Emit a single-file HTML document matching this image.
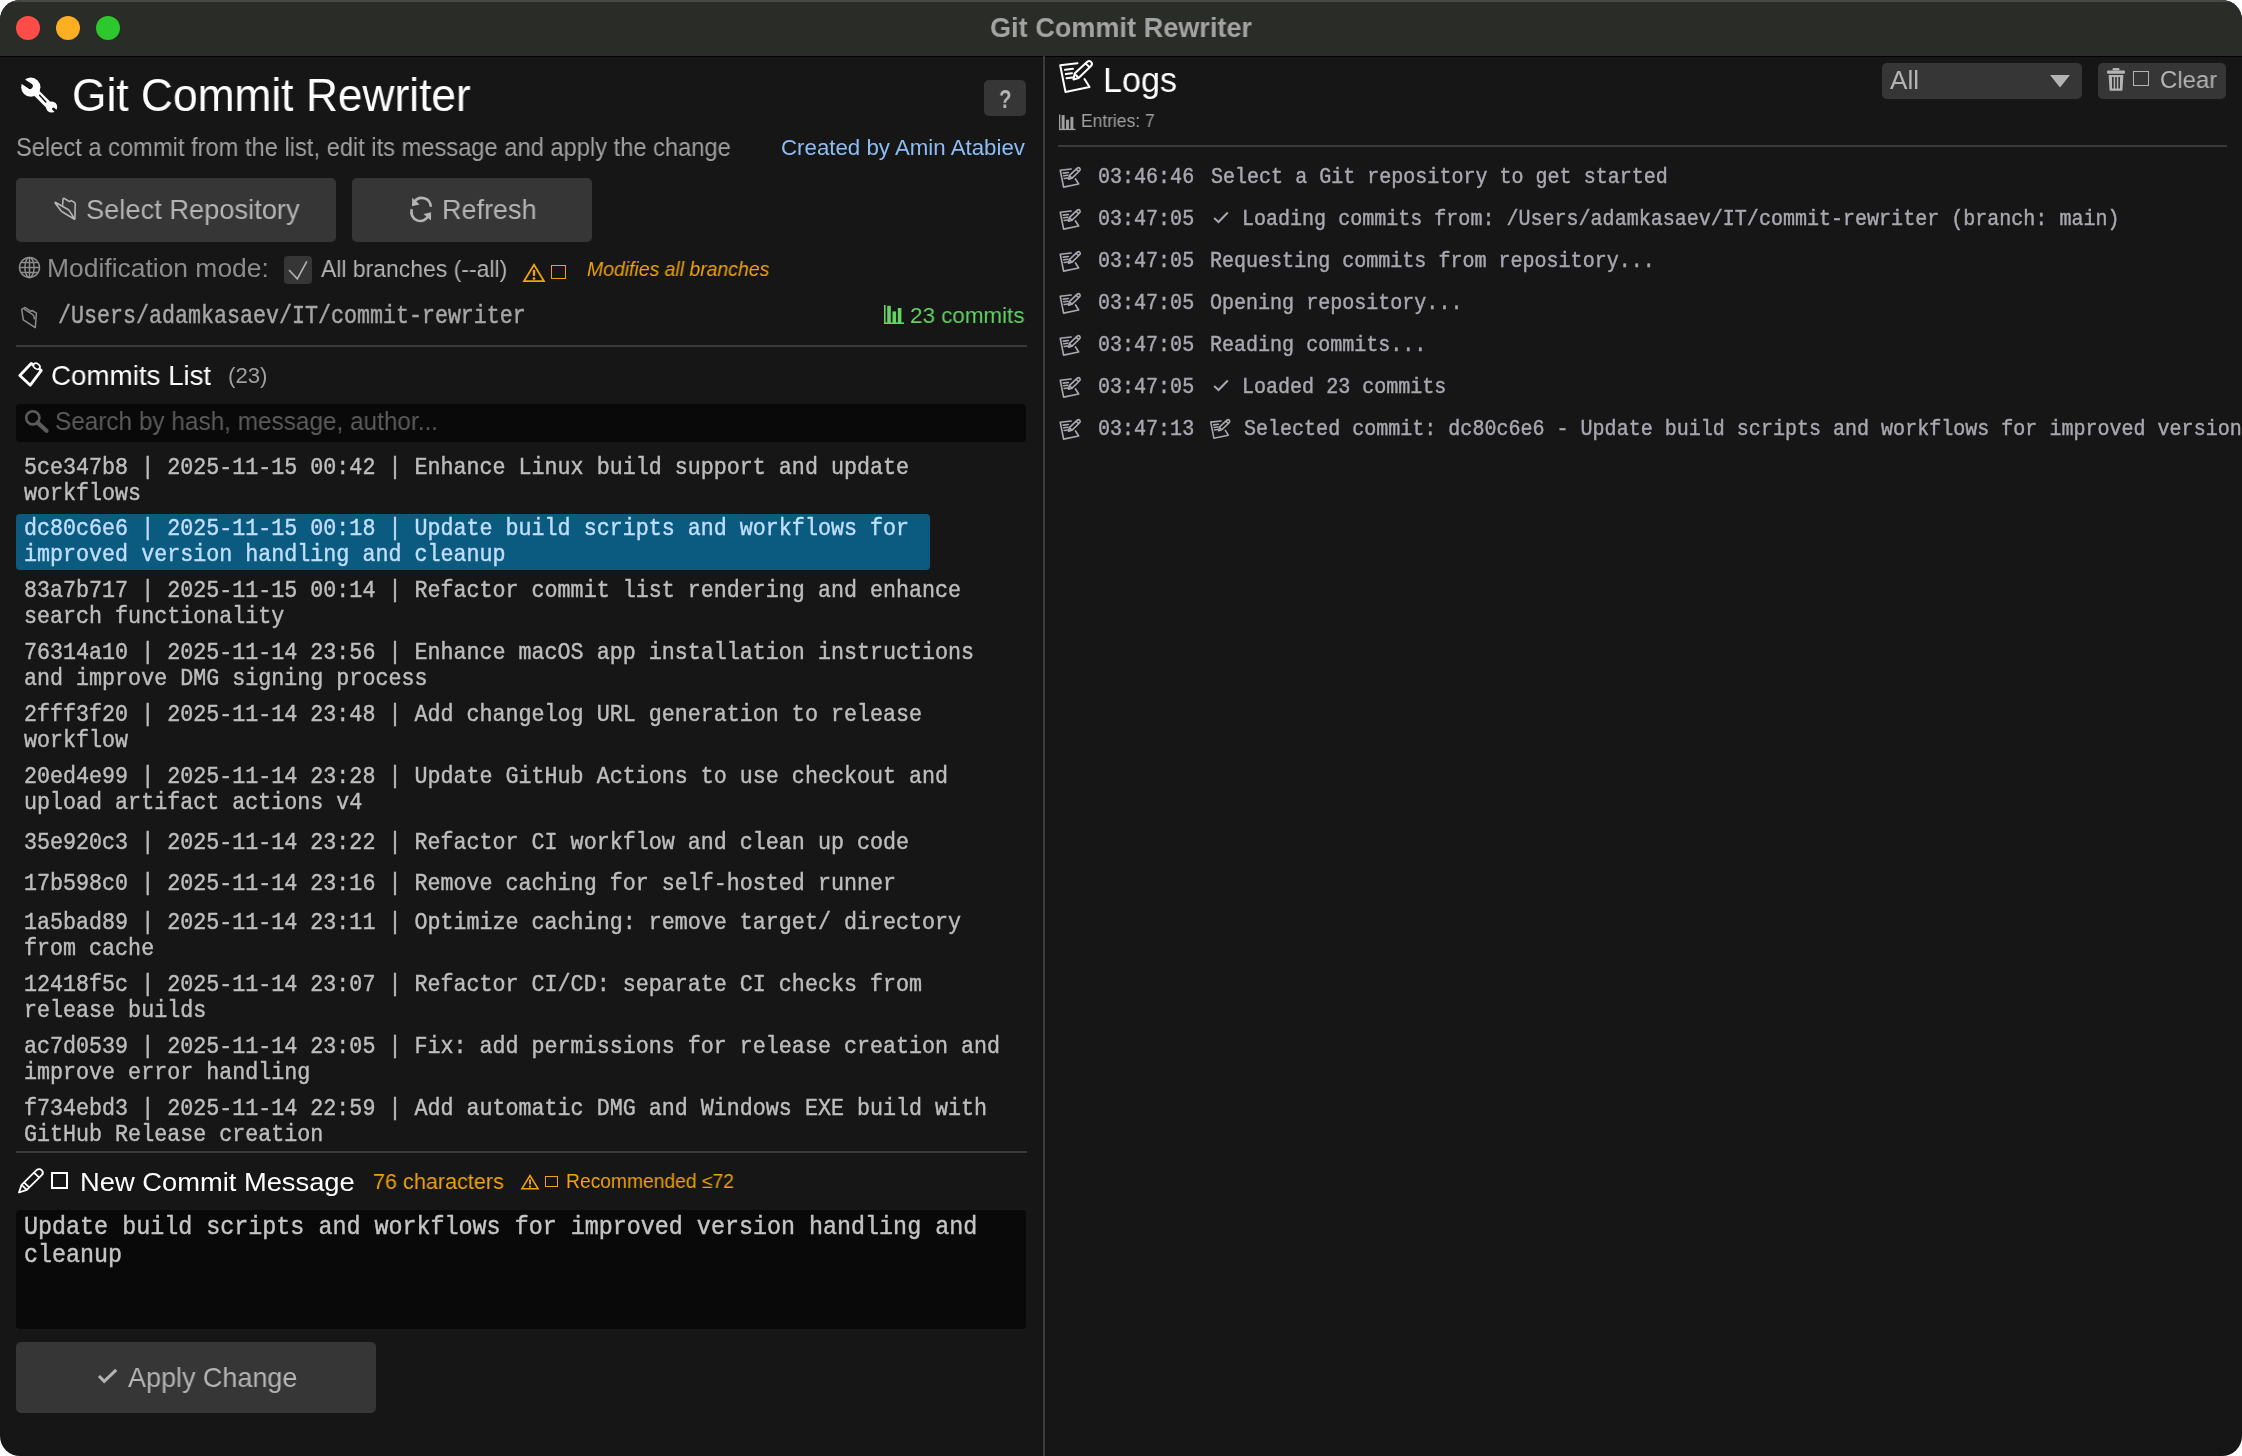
<!DOCTYPE html>
<html><head><meta charset="utf-8"><title>Git Commit Rewriter</title>
<style>
html,body{margin:0;padding:0;background:#ffffff;width:2242px;height:1456px;overflow:hidden}
.win{position:absolute;left:0;top:0;width:2242px;height:1456px;border-radius:20px;overflow:hidden;background:#161616}
.t{position:absolute;white-space:pre;transform-origin:0 0;will-change:transform}
.m{-webkit-text-stroke:0.4px currentColor}
.ic{position:absolute;overflow:visible}
.bx{position:absolute;box-sizing:border-box}
.r{position:absolute;box-sizing:border-box}
</style></head><body>
<div class="win">
  <div class="r" style="left:0;top:0;width:2242px;height:56px;background:#2a2c28"></div>
  <div class="r" style="left:0;top:56px;width:2242px;height:1.4px;background:#020202"></div>
  <div class="r" style="left:0;top:0;width:2242px;height:1.5px;background:#5a5b59;opacity:.6"></div>
  <div class="r" style="left:16px;top:16px;width:24px;height:24px;border-radius:50%;background:#fe4d48"></div>
  <div class="r" style="left:56px;top:16px;width:24px;height:24px;border-radius:50%;background:#fdaf24"></div>
  <div class="r" style="left:96px;top:16px;width:24px;height:24px;border-radius:50%;background:#2cc82c"></div>
  <!-- vertical separator -->
  <div class="r" style="left:1043px;top:56px;width:2px;height:1400px;background:#3a3a3a"></div>
  <!-- help button -->
  <div class="r" style="left:984px;top:80px;width:42px;height:36px;border-radius:5px;background:#363636"></div>
  <!-- buttons -->
  <div class="r" style="left:16px;top:178px;width:320px;height:64px;border-radius:5px;background:#363636"></div>
  <div class="r" style="left:352px;top:178px;width:240px;height:64px;border-radius:5px;background:#363636"></div>
  <!-- checkbox -->
  <div class="r" style="left:284px;top:256px;width:28px;height:28px;border-radius:4px;background:#363636"></div>
  <svg class="ic" style="left:284px;top:256px;width:28px;height:28px" viewBox="0 0 28 28"><path d="M5 14 L13.3 22.8 L22.8 5.4" fill="none" stroke="#b4b4b4" stroke-width="1.6"/></svg>
  <!-- separators -->
  <div class="r" style="left:16px;top:345px;width:1011px;height:2px;background:#3a3a3a"></div>
  <div class="r" style="left:16px;top:1151px;width:1011px;height:2px;background:#3a3a3a"></div>
  <div class="r" style="left:1058px;top:145px;width:1169px;height:2px;background:#3a3a3a"></div>
  <!-- search box -->
  <div class="r" style="left:16px;top:404px;width:1010px;height:38px;border-radius:4px;background:#090909"></div>
  <!-- selected row -->
  <div class="r" style="left:16px;top:514px;width:914px;height:56px;border-radius:4px;background:#0b5a80"></div>
  <!-- text edit -->
  <div class="r" style="left:16px;top:1210px;width:1010px;height:119px;border-radius:4px;background:#090909"></div>
  <!-- apply button -->
  <div class="r" style="left:16px;top:1342px;width:360px;height:71px;border-radius:5px;background:#363636"></div>
  <!-- dropdown + clear -->
  <div class="r" style="left:1882px;top:63px;width:200px;height:36px;border-radius:5px;background:#363636"></div>
  <div class="r" style="left:2098px;top:63px;width:128px;height:36px;border-radius:5px;background:#363636"></div>
  <svg class="ic" style="left:16px;top:72px;width:45px;height:45px;" viewBox="0 0 45 45"><circle cx="14.8" cy="15.2" r="9.6" fill="#fff"/><path d="M18 18.5 L34.5 35" stroke="#fff" stroke-width="7"/><circle cx="35.6" cy="35" r="5.6" fill="#fff"/><path d="M4 7.5 L14 14.2" stroke="#161616" stroke-width="5.6" stroke-linecap="round"/><path d="M37.5 37 L43 42" stroke="#161616" stroke-width="3" stroke-linecap="round"/><path d="M23.6 23.2 L29.8 30" stroke="#161616" stroke-width="1.5" stroke-linecap="round"/></svg><svg class="ic" style="left:48px;top:190px;width:36px;height:36px;" viewBox="0 0 36 36"><g fill="none" stroke="#b4b4b4" stroke-width="1.6" stroke-linejoin="round" stroke-linecap="round"><path d="M14.6 15.3 L15 9.2 Q15.2 8 16.4 8.5 L21.5 11.6 L23.2 10.6 L26.4 12.4 Q27.2 12.9 27.2 13.8 L26.9 28.8"/><path d="M7.2 12.9 Q6.8 12.1 7.7 12.5 L20.5 19.8 Q22 20.8 26.5 29.2 L14.5 22 Q13.6 21.5 13.2 21 Z"/></g></svg><svg class="ic" style="left:409px;top:196px;width:25px;height:26px;" viewBox="0 0 25 26"><g fill="none" stroke="#b4b4b4" stroke-width="2.6"><path d="M5.2 6.2 A9 9 0 0 1 21.8 10.8"/><path d="M19.6 19.6 A9 9 0 0 1 2.8 13.2"/></g><path d="M3.2 1.8 L3 10.2 L10.6 8.4 Z" fill="#b4b4b4"/><path d="M22 24.6 L22.1 16.2 L14.5 18 Z" fill="#b4b4b4"/></svg><svg class="ic" style="left:18px;top:256px;width:23px;height:23px;" viewBox="0 0 23 23"><g fill="none" stroke="#8c8c8c" stroke-width="1.5"><circle cx="11.5" cy="11.5" r="10"/><ellipse cx="11.5" cy="11.5" rx="4.6" ry="10"/><path d="M11.5 1.5 V21.5 M1.5 11.5 H21.5 M3 6.5 H20 M3 16.5 H20"/></g></svg><svg class="ic" style="left:523px;top:263px;width:22px;height:19px;" viewBox="0 0 22 19"><path d="M11.0 1.8 L20.92 18.1 L1.08 18.1 Z" fill="none" stroke="#f0a30a" stroke-width="1.8" stroke-linejoin="miter"/><path d="M11.0 6.84 V12.920000000000002" stroke="#f0a30a" stroke-width="2.3400000000000003"/><circle cx="11.0" cy="15.579999999999998" r="1.35" fill="#f0a30a"/></svg><div class="bx" style="left:551px;top:264.7px;width:15px;height:14.2px;border:1.8px solid #f0a30a"></div><svg class="ic" style="left:521px;top:1174px;width:18px;height:15.5px;" viewBox="0 0 18 15.5"><path d="M9.0 1.5 L17.1 14.75 L0.8999999999999999 14.75 Z" fill="none" stroke="#f0a30a" stroke-width="1.5" stroke-linejoin="miter"/><path d="M9.0 5.58 V10.540000000000001" stroke="#f0a30a" stroke-width="1.9500000000000002"/><circle cx="9.0" cy="12.709999999999999" r="1.125" fill="#f0a30a"/></svg><div class="bx" style="left:544.7px;top:1175.6px;width:13.3px;height:11.3px;border:1.5px solid #f0a30a"></div><svg class="ic" style="left:14px;top:300px;width:30px;height:34px;" viewBox="0 0 30 34"><g fill="none" stroke="#8c8c8c" stroke-width="1.5" stroke-linejoin="round" stroke-linecap="round"><path d="M7.7 9.3 L11.2 7.5 L16.8 11.4 L18.2 10.5 L22.4 13.1 L21.3 27.6 L9.3 19.9 Z"/><path d="M10.7 9.3 L19.2 15 Q20.3 16 20.3 18.7"/></g></svg><svg class="ic" style="left:884px;top:305px;width:20px;height:19px;" viewBox="0 0 20 19"><g fill="#64d264"><rect x="0" y="0" width="1.6" height="19"/><rect x="3.2" y="0.8" width="3.6" height="17.4"/><rect x="8.5" y="6.4" width="3.6" height="11.8"/><rect x="13.8" y="3" width="3.6" height="15.2"/><rect x="0" y="17.4" width="20" height="1.6"/></g></svg><svg class="ic" style="left:14px;top:356px;width:34px;height:34px;" viewBox="0 0 34 34"><path d="M17.2 7.5 L27.3 14.4 L16.3 29.2 L5.8 19.5 Z" fill="none" stroke="#fff" stroke-width="2.8" stroke-linejoin="round"/><ellipse cx="22.7" cy="10.3" rx="3.5" ry="2.6" transform="rotate(35 22.7 10.3)" fill="#161616" stroke="#fff" stroke-width="1.6"/></svg><svg class="ic" style="left:24px;top:409px;width:25px;height:24px;" viewBox="0 0 25 24"><circle cx="8.8" cy="8.8" r="6.6" fill="none" stroke="#5c5c5c" stroke-width="2.6"/><path d="M13.6 13.6 L22.5 21.8" stroke="#5c5c5c" stroke-width="4.2" stroke-linecap="round"/></svg><svg class="ic" style="left:17px;top:1168px;width:27px;height:26px;" viewBox="0 0 27 26"><g fill="none" stroke="#fff" stroke-width="1.8" stroke-linejoin="round"><path d="M2 24.5 L4.6 16.8 L19.5 2.2 C21 0.8 23.4 0.9 24.8 2.3 C26.1 3.7 26.1 5.8 24.7 7.2 L9.8 21.8 Z"/><path d="M4.6 16.8 L9.8 21.8 M7 14.4 L12.2 19.4 M17 4.6 L22.2 9.6"/></g></svg><div class="bx" style="left:50.5px;top:1172px;width:17.5px;height:17px;border:2px solid #fff"></div><svg class="ic" style="left:97px;top:1368px;width:21px;height:16px;" viewBox="0 0 21 16"><path d="M2 8 L7.2 13.3 L19.2 1.8" fill="none" stroke="#b4b4b4" stroke-width="3"/></svg><svg class="ic" style="left:1059px;top:60px;width:35px;height:35px;" viewBox="0 0 35 35"><g fill="none" stroke="#fff" stroke-width="2.0" stroke-linejoin="round" stroke-linecap="round"><path d="M1.2 5.2 L18.5 3.2 M1.2 5.2 L6.5 32 L30.5 27 L25.5 19"/><path d="M6 9.8 L14 8.8 M6.8 14 L13 13.2 M7.5 18.2 L13.5 17.4"/><path d="M14.5 19.5 L15.6 13.6 L28.3 1.8 C29.6 0.8 31.3 1 32.3 2.2 C33.2 3.4 33 5 32 6 L19.6 18 Z"/><path d="M16.8 15 L18.8 17 M26.5 3.6 L30.2 6.8"/></g></svg><svg class="ic" style="left:1059px;top:113.5px;width:16.5px;height:16.5px;" viewBox="0 0 20 19"><g fill="#a0a0a0"><rect x="0" y="0" width="1.6" height="19"/><rect x="3.2" y="0.8" width="3.6" height="17.4"/><rect x="8.5" y="6.4" width="3.6" height="11.8"/><rect x="13.8" y="3" width="3.6" height="15.2"/><rect x="0" y="17.4" width="20" height="1.6"/></g></svg><svg class="ic" style="left:2050px;top:74.5px;width:20px;height:12.5px;" viewBox="0 0 20 12.5"><path d="M0 0 H20 L10 12.5 Z" fill="#b4b4b4"/></svg><svg class="ic" style="left:2107px;top:68px;width:18px;height:23px;" viewBox="0 0 18 23"><g fill="#b4b4b4"><rect x="5.5" y="0" width="7" height="2.6" rx="1"/><rect x="0" y="2.4" width="18" height="3.4" rx="1.2"/><path d="M1.6 7 H16.4 L15.4 22.8 H2.6 Z"/></g><g fill="#363636"><rect x="5" y="9" width="1.7" height="11.5"/><rect x="8.15" y="9" width="1.7" height="11.5"/><rect x="11.3" y="9" width="1.7" height="11.5"/></g></svg><div class="bx" style="left:2133px;top:71.4px;width:16px;height:14.8px;border:1.8px solid #b4b4b4"></div><svg class="ic" style="left:1059px;top:167px;width:23px;height:22px;overflow:visible" viewBox="0 0 35 35"><g fill="none" stroke="#a9a7b0" stroke-width="2.6" stroke-linejoin="round" stroke-linecap="round"><path d="M1.2 5.2 L18.5 3.2 M1.2 5.2 L6.5 32 L30.5 27 L25.5 19"/><path d="M6 9.8 L14 8.8 M6.8 14 L13 13.2 M7.5 18.2 L13.5 17.4"/><path d="M14.5 19.5 L15.6 13.6 L28.3 1.8 C29.6 0.8 31.3 1 32.3 2.2 C33.2 3.4 33 5 32 6 L19.6 18 Z"/><path d="M16.8 15 L18.8 17 M26.5 3.6 L30.2 6.8"/></g></svg><svg class="ic" style="left:1059px;top:209px;width:23px;height:22px;overflow:visible" viewBox="0 0 35 35"><g fill="none" stroke="#a9a7b0" stroke-width="2.6" stroke-linejoin="round" stroke-linecap="round"><path d="M1.2 5.2 L18.5 3.2 M1.2 5.2 L6.5 32 L30.5 27 L25.5 19"/><path d="M6 9.8 L14 8.8 M6.8 14 L13 13.2 M7.5 18.2 L13.5 17.4"/><path d="M14.5 19.5 L15.6 13.6 L28.3 1.8 C29.6 0.8 31.3 1 32.3 2.2 C33.2 3.4 33 5 32 6 L19.6 18 Z"/><path d="M16.8 15 L18.8 17 M26.5 3.6 L30.2 6.8"/></g></svg><svg class="ic" style="left:1059px;top:251px;width:23px;height:22px;overflow:visible" viewBox="0 0 35 35"><g fill="none" stroke="#a9a7b0" stroke-width="2.6" stroke-linejoin="round" stroke-linecap="round"><path d="M1.2 5.2 L18.5 3.2 M1.2 5.2 L6.5 32 L30.5 27 L25.5 19"/><path d="M6 9.8 L14 8.8 M6.8 14 L13 13.2 M7.5 18.2 L13.5 17.4"/><path d="M14.5 19.5 L15.6 13.6 L28.3 1.8 C29.6 0.8 31.3 1 32.3 2.2 C33.2 3.4 33 5 32 6 L19.6 18 Z"/><path d="M16.8 15 L18.8 17 M26.5 3.6 L30.2 6.8"/></g></svg><svg class="ic" style="left:1059px;top:293px;width:23px;height:22px;overflow:visible" viewBox="0 0 35 35"><g fill="none" stroke="#a9a7b0" stroke-width="2.6" stroke-linejoin="round" stroke-linecap="round"><path d="M1.2 5.2 L18.5 3.2 M1.2 5.2 L6.5 32 L30.5 27 L25.5 19"/><path d="M6 9.8 L14 8.8 M6.8 14 L13 13.2 M7.5 18.2 L13.5 17.4"/><path d="M14.5 19.5 L15.6 13.6 L28.3 1.8 C29.6 0.8 31.3 1 32.3 2.2 C33.2 3.4 33 5 32 6 L19.6 18 Z"/><path d="M16.8 15 L18.8 17 M26.5 3.6 L30.2 6.8"/></g></svg><svg class="ic" style="left:1059px;top:335px;width:23px;height:22px;overflow:visible" viewBox="0 0 35 35"><g fill="none" stroke="#a9a7b0" stroke-width="2.6" stroke-linejoin="round" stroke-linecap="round"><path d="M1.2 5.2 L18.5 3.2 M1.2 5.2 L6.5 32 L30.5 27 L25.5 19"/><path d="M6 9.8 L14 8.8 M6.8 14 L13 13.2 M7.5 18.2 L13.5 17.4"/><path d="M14.5 19.5 L15.6 13.6 L28.3 1.8 C29.6 0.8 31.3 1 32.3 2.2 C33.2 3.4 33 5 32 6 L19.6 18 Z"/><path d="M16.8 15 L18.8 17 M26.5 3.6 L30.2 6.8"/></g></svg><svg class="ic" style="left:1059px;top:377px;width:23px;height:22px;overflow:visible" viewBox="0 0 35 35"><g fill="none" stroke="#a9a7b0" stroke-width="2.6" stroke-linejoin="round" stroke-linecap="round"><path d="M1.2 5.2 L18.5 3.2 M1.2 5.2 L6.5 32 L30.5 27 L25.5 19"/><path d="M6 9.8 L14 8.8 M6.8 14 L13 13.2 M7.5 18.2 L13.5 17.4"/><path d="M14.5 19.5 L15.6 13.6 L28.3 1.8 C29.6 0.8 31.3 1 32.3 2.2 C33.2 3.4 33 5 32 6 L19.6 18 Z"/><path d="M16.8 15 L18.8 17 M26.5 3.6 L30.2 6.8"/></g></svg><svg class="ic" style="left:1059px;top:419px;width:23px;height:22px;overflow:visible" viewBox="0 0 35 35"><g fill="none" stroke="#a9a7b0" stroke-width="2.6" stroke-linejoin="round" stroke-linecap="round"><path d="M1.2 5.2 L18.5 3.2 M1.2 5.2 L6.5 32 L30.5 27 L25.5 19"/><path d="M6 9.8 L14 8.8 M6.8 14 L13 13.2 M7.5 18.2 L13.5 17.4"/><path d="M14.5 19.5 L15.6 13.6 L28.3 1.8 C29.6 0.8 31.3 1 32.3 2.2 C33.2 3.4 33 5 32 6 L19.6 18 Z"/><path d="M16.8 15 L18.8 17 M26.5 3.6 L30.2 6.8"/></g></svg><svg class="ic" style="left:1213px;top:211px;width:16px;height:13px;" viewBox="0 0 16 13"><path d="M1.2 7 L5.5 11 L14.8 1.5" fill="none" stroke="#a9a7b0" stroke-width="2"/></svg><svg class="ic" style="left:1213px;top:379px;width:16px;height:13px;" viewBox="0 0 16 13"><path d="M1.2 7 L5.5 11 L14.8 1.5" fill="none" stroke="#a9a7b0" stroke-width="2"/></svg><svg class="ic" style="left:1210px;top:419px;width:21px;height:21px;" viewBox="0 0 35 35"><g fill="none" stroke="#a9a7b0" stroke-width="2.6" stroke-linejoin="round" stroke-linecap="round"><path d="M1.2 5.2 L18.5 3.2 M1.2 5.2 L6.5 32 L30.5 27 L25.5 19"/><path d="M6 9.8 L14 8.8 M6.8 14 L13 13.2 M7.5 18.2 L13.5 17.4"/><path d="M14.5 19.5 L15.6 13.6 L28.3 1.8 C29.6 0.8 31.3 1 32.3 2.2 C33.2 3.4 33 5 32 6 L19.6 18 Z"/><path d="M16.8 15 L18.8 17 M26.5 3.6 L30.2 6.8"/></g></svg>
  <div class="t" style="left:989.95px;top:12.67px;font-family:'Liberation Sans', sans-serif;font-size:28.444px;line-height:28.444px;font-style:normal;font-weight:700;color:#a3a3a3;transform:scale(0.9532,1.0000);">Git Commit Rewriter</div><div class="t" style="left:72.12px;top:73.47px;font-family:'Liberation Sans', sans-serif;font-size:45.511px;line-height:45.511px;font-style:normal;font-weight:400;color:#ffffff;transform:scale(0.9738,1.0000);">Git Commit Rewriter</div><div class="t" style="left:999.09px;top:87.48px;font-family:'Liberation Sans', sans-serif;font-size:25.884px;line-height:25.884px;font-style:normal;font-weight:700;color:#b4b4b4;transform:scale(0.7946,1.0000);">?</div><div class="t" style="left:15.66px;top:134.53px;font-family:'Liberation Sans', sans-serif;font-size:25.600px;line-height:25.600px;font-style:normal;font-weight:400;color:#a0a0a0;transform:scale(0.9253,1.0000);">Select a commit from the list, edit its message and apply the change</div><div class="t" style="left:781.47px;top:136.84px;font-family:'Liberation Sans', sans-serif;font-size:22.044px;line-height:22.044px;font-style:normal;font-weight:400;color:#8dbdf5;transform:scale(1.0112,1.0000);">Created by Amin Atabiev</div><div class="t" style="left:85.55px;top:195.90px;font-family:'Liberation Sans', sans-serif;font-size:27.876px;line-height:27.876px;font-style:normal;font-weight:400;color:#b4b4b4;transform:scale(0.9782,1.0000);">Select Repository</div><div class="t" style="left:441.98px;top:196.12px;font-family:'Liberation Sans', sans-serif;font-size:27.733px;line-height:27.733px;font-style:normal;font-weight:400;color:#b4b4b4;transform:scale(0.9735,1.0000);">Refresh</div><div class="t" style="left:47.13px;top:256.33px;font-family:'Liberation Sans', sans-serif;font-size:24.889px;line-height:24.889px;font-style:normal;font-weight:400;color:#8c8c8c;transform:scale(1.0625,1.0000);">Modification mode:</div><div class="t" style="left:320.60px;top:256.95px;font-family:'Liberation Sans', sans-serif;font-size:24.747px;line-height:24.747px;font-style:normal;font-weight:400;color:#b4b4b4;transform:scale(0.9278,1.0000);">All branches (--all)</div><div class="t" style="left:587.00px;top:259.66px;font-family:'Liberation Sans', sans-serif;font-size:19.769px;line-height:19.769px;font-style:italic;font-weight:400;color:#f0a30a;transform:scale(0.9823,1.0000);">Modifies all branches</div><div class="t" style="left:909.84px;top:304.33px;font-family:'Liberation Sans', sans-serif;font-size:22.756px;line-height:22.756px;font-style:normal;font-weight:400;color:#64d264;transform:scale(0.9847,1.0000);">23 commits</div><div class="t" style="left:51.20px;top:362.06px;font-family:'Liberation Sans', sans-serif;font-size:28.160px;line-height:28.160px;font-style:normal;font-weight:400;color:#ffffff;transform:scale(0.9846,1.0000);">Commits List</div><div class="t" style="left:228.16px;top:364.89px;font-family:'Liberation Sans', sans-serif;font-size:21.689px;line-height:21.689px;font-style:normal;font-weight:400;color:#a0a0a0;transform:scale(1.0239,1.0000);">(23)</div><div class="t" style="left:54.99px;top:409.31px;font-family:'Liberation Sans', sans-serif;font-size:25.031px;line-height:25.031px;font-style:normal;font-weight:400;color:#5c5c5c;transform:scale(0.9732,1.0000);">Search by hash, message, author...</div><div class="t" style="left:80.26px;top:1169.12px;font-family:'Liberation Sans', sans-serif;font-size:26.311px;line-height:26.311px;font-style:normal;font-weight:400;color:#ffffff;transform:scale(1.0386,1.0000);">New Commit Message</div><div class="t" style="left:372.78px;top:1170.52px;font-family:'Liberation Sans', sans-serif;font-size:22.187px;line-height:22.187px;font-style:normal;font-weight:400;color:#f0a30a;transform:scale(0.9745,1.0000);">76 characters</div><div class="t" style="left:565.79px;top:1172.12px;font-family:'Liberation Sans', sans-serif;font-size:19.342px;line-height:19.342px;font-style:normal;font-weight:400;color:#f0a30a;transform:scale(0.9966,1.0000);">Recommended ≤72</div><div class="t" style="left:128.00px;top:1364.28px;font-family:'Liberation Sans', sans-serif;font-size:27.307px;line-height:27.307px;font-style:normal;font-weight:400;color:#b4b4b4;transform:scale(0.9880,1.0000);">Apply Change</div><div class="t" style="left:1102.58px;top:62.50px;font-family:'Liberation Sans', sans-serif;font-size:35.556px;line-height:35.556px;font-style:normal;font-weight:400;color:#ffffff;transform:scale(0.9610,1.0000);">Logs</div><div class="t" style="left:1080.73px;top:113.25px;font-family:'Liberation Sans', sans-serif;font-size:17.778px;line-height:17.778px;font-style:normal;font-weight:400;color:#a0a0a0;transform:scale(0.9811,1.0000);">Entries: 7</div><div class="t" style="left:1889.90px;top:66.74px;font-family:'Liberation Sans', sans-serif;font-size:26.169px;line-height:26.169px;font-style:normal;font-weight:400;color:#b4b4b4;transform:scale(0.9909,1.0000);">All</div><div class="t" style="left:2159.88px;top:68.43px;font-family:'Liberation Sans', sans-serif;font-size:24.178px;line-height:24.178px;font-style:normal;font-weight:400;color:#b4b4b4;transform:scale(0.9907,1.0000);">Clear</div>
  <div class="t m" style="left:57.73px;top:304.66px;font-family:'Liberation Mono', monospace;font-size:21.663px;line-height:21.663px;font-style:normal;font-weight:400;color:#a6a6a6;transform:scale(1.0000,1.1500);">/Users/adamkasaev/IT/commit-rewriter</div>
  <div style="position:absolute;left:0;top:446px;width:1040px;height:706px;overflow:hidden">
    <div style="position:absolute;left:0;top:-446px;width:1040px;height:1456px">
    <div class="t m" style="left:23.74px;top:455.55px;font-family:'Liberation Mono', monospace;font-size:21.696px;line-height:21.696px;font-style:normal;font-weight:400;color:#bdbdbd;transform:scale(1.0000,1.1400);">5ce347b8 | 2025-11-15 00:42 | Enhance Linux build support and update</div><div class="t m" style="left:23.74px;top:481.55px;font-family:'Liberation Mono', monospace;font-size:21.696px;line-height:21.696px;font-style:normal;font-weight:400;color:#bdbdbd;transform:scale(1.0000,1.1400);">workflows</div><div class="t m" style="left:23.74px;top:517.35px;font-family:'Liberation Mono', monospace;font-size:21.696px;line-height:21.696px;font-style:normal;font-weight:400;color:#c0deff;transform:scale(1.0000,1.1400);">dc80c6e6 | 2025-11-15 00:18 | Update build scripts and workflows for</div><div class="t m" style="left:23.74px;top:543.35px;font-family:'Liberation Mono', monospace;font-size:21.696px;line-height:21.696px;font-style:normal;font-weight:400;color:#c0deff;transform:scale(1.0000,1.1400);">improved version handling and cleanup</div><div class="t m" style="left:23.74px;top:579.35px;font-family:'Liberation Mono', monospace;font-size:21.696px;line-height:21.696px;font-style:normal;font-weight:400;color:#bdbdbd;transform:scale(1.0000,1.1400);">83a7b717 | 2025-11-15 00:14 | Refactor commit list rendering and enhance</div><div class="t m" style="left:23.74px;top:605.35px;font-family:'Liberation Mono', monospace;font-size:21.696px;line-height:21.696px;font-style:normal;font-weight:400;color:#bdbdbd;transform:scale(1.0000,1.1400);">search functionality</div><div class="t m" style="left:23.74px;top:641.25px;font-family:'Liberation Mono', monospace;font-size:21.696px;line-height:21.696px;font-style:normal;font-weight:400;color:#bdbdbd;transform:scale(1.0000,1.1400);">76314a10 | 2025-11-14 23:56 | Enhance macOS app installation instructions</div><div class="t m" style="left:23.74px;top:667.25px;font-family:'Liberation Mono', monospace;font-size:21.696px;line-height:21.696px;font-style:normal;font-weight:400;color:#bdbdbd;transform:scale(1.0000,1.1400);">and improve DMG signing process</div><div class="t m" style="left:23.74px;top:703.35px;font-family:'Liberation Mono', monospace;font-size:21.696px;line-height:21.696px;font-style:normal;font-weight:400;color:#bdbdbd;transform:scale(1.0000,1.1400);">2fff3f20 | 2025-11-14 23:48 | Add changelog URL generation to release</div><div class="t m" style="left:23.74px;top:729.35px;font-family:'Liberation Mono', monospace;font-size:21.696px;line-height:21.696px;font-style:normal;font-weight:400;color:#bdbdbd;transform:scale(1.0000,1.1400);">workflow</div><div class="t m" style="left:23.74px;top:765.05px;font-family:'Liberation Mono', monospace;font-size:21.696px;line-height:21.696px;font-style:normal;font-weight:400;color:#bdbdbd;transform:scale(1.0000,1.1400);">20ed4e99 | 2025-11-14 23:28 | Update GitHub Actions to use checkout and</div><div class="t m" style="left:23.74px;top:791.05px;font-family:'Liberation Mono', monospace;font-size:21.696px;line-height:21.696px;font-style:normal;font-weight:400;color:#bdbdbd;transform:scale(1.0000,1.1400);">upload artifact actions v4</div><div class="t m" style="left:23.74px;top:830.55px;font-family:'Liberation Mono', monospace;font-size:21.696px;line-height:21.696px;font-style:normal;font-weight:400;color:#bdbdbd;transform:scale(1.0000,1.1400);">35e920c3 | 2025-11-14 23:22 | Refactor CI workflow and clean up code</div><div class="t m" style="left:23.74px;top:872.35px;font-family:'Liberation Mono', monospace;font-size:21.696px;line-height:21.696px;font-style:normal;font-weight:400;color:#bdbdbd;transform:scale(1.0000,1.1400);">17b598c0 | 2025-11-14 23:16 | Remove caching for self-hosted runner</div><div class="t m" style="left:23.74px;top:911.25px;font-family:'Liberation Mono', monospace;font-size:21.696px;line-height:21.696px;font-style:normal;font-weight:400;color:#bdbdbd;transform:scale(1.0000,1.1400);">1a5bad89 | 2025-11-14 23:11 | Optimize caching: remove target/ directory</div><div class="t m" style="left:23.74px;top:937.25px;font-family:'Liberation Mono', monospace;font-size:21.696px;line-height:21.696px;font-style:normal;font-weight:400;color:#bdbdbd;transform:scale(1.0000,1.1400);">from cache</div><div class="t m" style="left:23.74px;top:973.25px;font-family:'Liberation Mono', monospace;font-size:21.696px;line-height:21.696px;font-style:normal;font-weight:400;color:#bdbdbd;transform:scale(1.0000,1.1400);">12418f5c | 2025-11-14 23:07 | Refactor CI/CD: separate CI checks from</div><div class="t m" style="left:23.74px;top:999.25px;font-family:'Liberation Mono', monospace;font-size:21.696px;line-height:21.696px;font-style:normal;font-weight:400;color:#bdbdbd;transform:scale(1.0000,1.1400);">release builds</div><div class="t m" style="left:23.74px;top:1034.55px;font-family:'Liberation Mono', monospace;font-size:21.696px;line-height:21.696px;font-style:normal;font-weight:400;color:#bdbdbd;transform:scale(1.0000,1.1400);">ac7d0539 | 2025-11-14 23:05 | Fix: add permissions for release creation and</div><div class="t m" style="left:23.74px;top:1060.55px;font-family:'Liberation Mono', monospace;font-size:21.696px;line-height:21.696px;font-style:normal;font-weight:400;color:#bdbdbd;transform:scale(1.0000,1.1400);">improve error handling</div><div class="t m" style="left:23.74px;top:1096.75px;font-family:'Liberation Mono', monospace;font-size:21.696px;line-height:21.696px;font-style:normal;font-weight:400;color:#bdbdbd;transform:scale(1.0000,1.1400);">f734ebd3 | 2025-11-14 22:59 | Add automatic DMG and Windows EXE build with</div><div class="t m" style="left:23.74px;top:1122.75px;font-family:'Liberation Mono', monospace;font-size:21.696px;line-height:21.696px;font-style:normal;font-weight:400;color:#bdbdbd;transform:scale(1.0000,1.1400);">GitHub Release creation</div>
    </div>
  </div>
  <div class="t m" style="left:23.94px;top:1215.37px;font-family:'Liberation Mono', monospace;font-size:23.363px;line-height:23.363px;font-style:normal;font-weight:400;color:#c4c4c4;transform:scale(1.0000,1.1300);">Update build scripts and workflows for improved version handling and</div><div class="t m" style="left:23.94px;top:1243.17px;font-family:'Liberation Mono', monospace;font-size:23.363px;line-height:23.363px;font-style:normal;font-weight:400;color:#c4c4c4;transform:scale(1.0000,1.1300);">cleanup</div>
  <div style="position:absolute;left:1046px;top:56px;width:1196px;height:1400px;overflow:hidden">
    <div style="position:absolute;left:-1046px;top:-56px;width:2242px;height:1456px">
    <div class="t m" style="left:1098.26px;top:165.90px;font-family:'Liberation Mono', monospace;font-size:20.047px;line-height:20.047px;font-style:normal;font-weight:400;color:#a9a7b0;transform:scale(1.0000,1.1200);">03:46:46</div><div class="t m" style="left:1210.52px;top:165.90px;font-family:'Liberation Mono', monospace;font-size:20.047px;line-height:20.047px;font-style:normal;font-weight:400;color:#a9a7b0;transform:scale(1.0000,1.1200);">Select a Git repository to get started</div><div class="t m" style="left:1098.26px;top:207.90px;font-family:'Liberation Mono', monospace;font-size:20.047px;line-height:20.047px;font-style:normal;font-weight:400;color:#a9a7b0;transform:scale(1.0000,1.1200);">03:47:05</div><div class="t m" style="left:1241.96px;top:207.90px;font-family:'Liberation Mono', monospace;font-size:20.047px;line-height:20.047px;font-style:normal;font-weight:400;color:#a9a7b0;transform:scale(1.0000,1.1200);">Loading commits from: /Users/adamkasaev/IT/commit-rewriter (branch: main)</div><div class="t m" style="left:1098.26px;top:249.90px;font-family:'Liberation Mono', monospace;font-size:20.047px;line-height:20.047px;font-style:normal;font-weight:400;color:#a9a7b0;transform:scale(1.0000,1.1200);">03:47:05</div><div class="t m" style="left:1209.58px;top:249.90px;font-family:'Liberation Mono', monospace;font-size:20.047px;line-height:20.047px;font-style:normal;font-weight:400;color:#a9a7b0;transform:scale(1.0000,1.1200);">Requesting commits from repository...</div><div class="t m" style="left:1098.26px;top:291.90px;font-family:'Liberation Mono', monospace;font-size:20.047px;line-height:20.047px;font-style:normal;font-weight:400;color:#a9a7b0;transform:scale(1.0000,1.1200);">03:47:05</div><div class="t m" style="left:1210.21px;top:291.90px;font-family:'Liberation Mono', monospace;font-size:20.047px;line-height:20.047px;font-style:normal;font-weight:400;color:#a9a7b0;transform:scale(1.0000,1.1200);">Opening repository...</div><div class="t m" style="left:1098.26px;top:333.90px;font-family:'Liberation Mono', monospace;font-size:20.047px;line-height:20.047px;font-style:normal;font-weight:400;color:#a9a7b0;transform:scale(1.0000,1.1200);">03:47:05</div><div class="t m" style="left:1209.58px;top:333.90px;font-family:'Liberation Mono', monospace;font-size:20.047px;line-height:20.047px;font-style:normal;font-weight:400;color:#a9a7b0;transform:scale(1.0000,1.1200);">Reading commits...</div><div class="t m" style="left:1098.26px;top:375.90px;font-family:'Liberation Mono', monospace;font-size:20.047px;line-height:20.047px;font-style:normal;font-weight:400;color:#a9a7b0;transform:scale(1.0000,1.1200);">03:47:05</div><div class="t m" style="left:1241.96px;top:375.90px;font-family:'Liberation Mono', monospace;font-size:20.047px;line-height:20.047px;font-style:normal;font-weight:400;color:#a9a7b0;transform:scale(1.0000,1.1200);">Loaded 23 commits</div><div class="t m" style="left:1098.26px;top:417.90px;font-family:'Liberation Mono', monospace;font-size:20.047px;line-height:20.047px;font-style:normal;font-weight:400;color:#a9a7b0;transform:scale(1.0000,1.1200);">03:47:13</div><div class="t m" style="left:1243.52px;top:417.90px;font-family:'Liberation Mono', monospace;font-size:20.047px;line-height:20.047px;font-style:normal;font-weight:400;color:#a9a7b0;transform:scale(1.0000,1.1200);">Selected commit: dc80c6e6 - Update build scripts and workflows for improved version handling and cleanup</div>
    </div>
  </div>
</div>
</body></html>
